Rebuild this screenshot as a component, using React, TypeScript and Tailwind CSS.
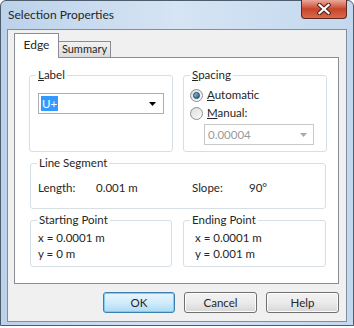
const font = { fontFamily: 'Lato, "Segoe UI", "Noto Sans", sans-serif' };

function GroupBox({
  title,
  className,
  children,
}: {
  title: React.ReactNode;
  className?: string;
  children?: React.ReactNode;
}) {
  return (
    <div className={"relative rounded-[3px] border border-[#d5dfe5] " + (className ?? "")}>
      <span className="absolute -top-[9px] left-[6px] bg-white px-[2px] leading-[16px]">
        {title}
      </span>
      {children}
    </div>
  );
}

function Radio({ checked, children }: { checked?: boolean; children: React.ReactNode }) {
  return (
    <div className="flex h-[18px] items-center gap-[4px]">
      <span className="flex h-[13px] w-[13px] items-center justify-center rounded-full border border-[#8e8f8f] bg-gradient-to-br from-[#dcdcdc] to-[#fbfbfb]">
        {checked && (
          <span className="h-[7px] w-[7px] rounded-full border border-[#1c3f5c] bg-gradient-to-br from-[#8fd0f3] to-[#1c5a86]" />
        )}
      </span>
      <span className="leading-[16px]">{children}</span>
    </div>
  );
}

function Arrow({ color }: { color: string }) {
  return (
    <svg width="7" height="4" viewBox="0 0 7 4">
      <path d="M0 0h7L3.5 4z" fill={color} />
    </svg>
  );
}

function Button({ children, primary }: { children: React.ReactNode; primary?: boolean }) {
  return (
    <div
      className={
        "flex h-[21px] items-center justify-center rounded-[3px] border " +
        (primary
          ? "w-[72px] border-[#3c7fb1] bg-gradient-to-b from-[#e8f6fd] via-[#d2ecfb] to-[#a9dbf6] shadow-[inset_0_0_0_1px_#7ecdf3]"
          : "w-[73px] border-[#707070] bg-gradient-to-b from-[#f2f2f2] via-[#ebebeb] to-[#d6d6d6] shadow-[inset_0_0_0_1px_#fcfcfc]")
      }
    >
      {children}
    </div>
  );
}

export default function App() {
  return (
    <div className="h-[328px] w-[354px] bg-white text-[11.5px] text-[#262626]" style={font}>
      <div className="flex h-[326px] flex-col rounded-t-[6px] border border-[#4d5d6d] bg-gradient-to-r from-[#bcd2ea] via-[#d6e4f4] to-[#c3d8ee] px-[6px] pb-[3px]">
        {/* title bar */}
        <div className="flex h-[28px] items-start justify-between">
          <span className="mt-[5px] pl-[1px] text-[12px] leading-[18px]">Selection Properties</span>
          <div className="-mt-[1px] flex h-[19px] w-[46px] items-center justify-center rounded-b-[4px] border border-t-0 border-[#5c2a22] bg-gradient-to-b from-[#e9a899] via-[#c7442a] to-[#d9694c]">
            <svg width="14" height="12" viewBox="0 0 14 12">
              <path d="M2.5 2l9 8M11.5 2l-9 8" stroke="#4a1a12" strokeWidth="4.2" strokeLinecap="square" />
              <path d="M2.5 2l9 8M11.5 2l-9 8" stroke="#ffffff" strokeWidth="2.3" strokeLinecap="square" />
            </svg>
          </div>
        </div>

        {/* client area */}
        <div className="flex flex-1 flex-col border border-[#7f8fa0] bg-[#f0f0f0] pl-[6px] pt-[3px]">
          <div className="relative z-10 flex h-[24px] items-end">
            <div className="-mb-[1px] flex h-[25px] w-[45px] items-center justify-center border border-b-0 border-[#898c95] bg-white pb-[2px] text-[12px]">
              Edge
            </div>
            <div className="flex h-[16px] w-[52px] items-center justify-center border border-b-0 border-l-0 border-[#898c95] bg-gradient-to-b from-[#f2f2f2] to-[#dcdcdc] text-[11px]">
              Summary
            </div>
          </div>

          <div className="h-[227px] w-[325px] border border-[#898c95] bg-white pl-[14px] pt-[17px]">
            <div className="flex gap-[10px]">
              <GroupBox
                title={
                  <>
                    <u>L</u>abel
                  </>
                }
                className="h-[77px] w-[144px] pl-[8px] pt-[17px]"
              >
                <div className="flex h-[21px] w-[126px] items-center justify-between border border-[#abadb3] pl-[2px] pr-[7px]">
                  <span className="bg-[#3399ff] px-[1px] leading-[15px] text-white">U+</span>
                  <Arrow color="#000" />
                </div>
              </GroupBox>
              <GroupBox
                title={
                  <>
                    <u>S</u>pacing
                  </>
                }
                className="h-[77px] w-[144px] pl-[6px] pt-[10px]"
              >
                <Radio checked>
                  <u>A</u>utomatic
                </Radio>
                <Radio>
                  <u>M</u>anual:
                </Radio>
                <div className="ml-[14px] mt-[2px] flex h-[21px] w-[110px] items-center justify-between border border-[#c9c9c9] pl-[3px] pr-[6px] text-[#9a9a9a]">
                  <span>0.00004</span>
                  <Arrow color="#a8a8a8" />
                </div>
              </GroupBox>
            </div>

            <GroupBox title="Line Segment" className="ml-[1px] mt-[11px] h-[46px] w-[296px] pt-[16px]">
              <div className="flex leading-[16px]">
                <span className="ml-[7px] w-[58px]">Length:</span>
                <span className="w-[96px]">0.001 m</span>
                <span className="w-[57px]">Slope:</span>
                <span>90°</span>
              </div>
            </GroupBox>

            <div className="ml-[1px] mt-[11px] flex gap-[11px]">
              <GroupBox title="Starting Point" className="h-[47px] w-[142px] pl-[7px] pt-[9px] leading-[16px]">
                <div>x = 0.0001 m</div>
                <div>y = 0 m</div>
              </GroupBox>
              <GroupBox title="Ending Point" className="h-[47px] w-[143px] pl-[11px] pt-[9px] leading-[16px]">
                <div>x = 0.0001 m</div>
                <div>y = 0.001 m</div>
              </GroupBox>
            </div>
          </div>

          <div className="mt-[8px] flex w-[325px] justify-end gap-[9px]">
            <Button primary>OK</Button>
            <Button>Cancel</Button>
            <Button>Help</Button>
          </div>
        </div>
      </div>
    </div>
  );
}
